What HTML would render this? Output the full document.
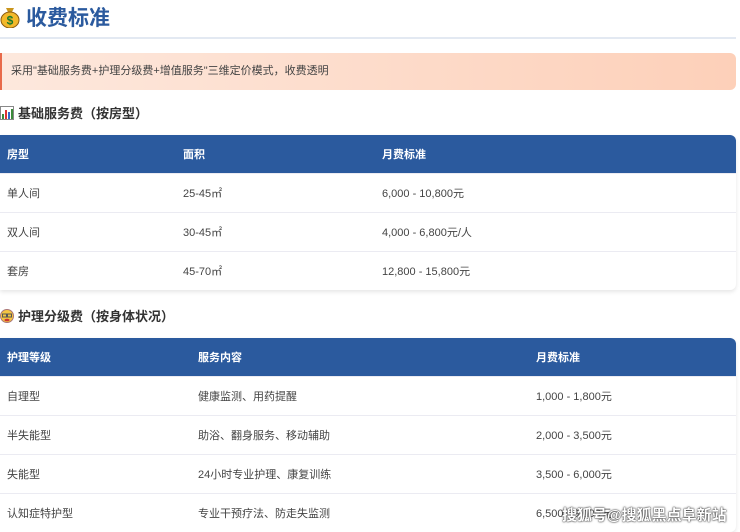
<!DOCTYPE html>
<html><head><meta charset="utf-8"><style>
*{margin:0;padding:0;box-sizing:border-box}
body{width:740px;height:531px;overflow:hidden;background:#fff;font-family:"Liberation Sans","Noto Sans CJK SC",sans-serif;color:#333;position:relative}
.h1{position:absolute;left:0;top:2px;height:30px;display:flex;align-items:center;font-size:21px;font-weight:bold;color:#2b5a9e}
.h1 .ic{width:20px;height:22px;margin-right:6px}
.line{position:absolute;left:0;top:37px;width:736px;height:2px;background:#e3e9f2}
.note{position:absolute;left:0;top:53px;width:736px;height:37px;background:linear-gradient(90deg,#fde8dd,#fdd0b9);border-left:2px solid #e86a4a;border-radius:0 6px 6px 0;font-size:11px;line-height:37px;padding-left:9px;color:#444}
.h2{position:absolute;left:0;font-size:13px;font-weight:bold;color:#333;display:flex;align-items:center}
.h2 .e{width:14px;height:14px;margin-right:4px}
table{position:absolute;left:0;width:736px;border-collapse:collapse;border-radius:0 6px 6px 0;overflow:hidden;box-shadow:0 2px 4px rgba(0,0,0,.1);font-size:11px}
th{background:#2b5a9e;color:#fff;text-align:left;font-weight:bold;height:38px;padding-left:7px}
td{height:39px;padding-left:7px;border-top:1px solid #ebebf2;color:#444}
.wm{position:absolute;left:562px;top:504px;font-size:15px;font-weight:bold;color:#fff;text-shadow:0 0 2px #333,0 0 1px #000;letter-spacing:0}
</style></head><body>
<div class="h1"><svg class="ic" viewBox="0 0 20 22"><path d="M6 2h8l-2 4h-4z" fill="#c9951c"/><ellipse cx="10" cy="14" rx="9" ry="8" fill="#f2b82a" stroke="#8a5a10" stroke-width="1"/><text x="10" y="18.5" font-size="12" text-anchor="middle" fill="#1a7a2a" font-weight="bold" font-family="Liberation Sans">$</text></svg>收费标准</div>
<div class="line"></div>
<div class="note">采用"基础服务费+护理分级费+增值服务"三维定价模式，收费透明</div>
<div class="h2" style="top:103px"><svg class="e" viewBox="0 0 14 14"><rect x="0.5" y="0.5" width="13" height="13" fill="#fff" stroke="#888"/><rect x="2" y="8" width="2" height="5" fill="#3a8a3a"/><rect x="5" y="4" width="2" height="9" fill="#d33"/><rect x="8" y="6" width="2" height="7" fill="#36c"/><rect x="11" y="3" width="2" height="10" fill="#3a8a3a"/></svg>基础服务费（按房型）</div>
<table style="top:135px">
<tr><th style="width:176px">房型</th><th style="width:199px">面积</th><th>月费标准</th></tr>
<tr><td>单人间</td><td>25-45㎡</td><td>6,000 - 10,800元</td></tr>
<tr><td>双人间</td><td>30-45㎡</td><td>4,000 - 6,800元/人</td></tr>
<tr><td>套房</td><td>45-70㎡</td><td>12,800 - 15,800元</td></tr>
</table>
<div class="h2" style="top:306px"><svg class="e" viewBox="0 0 14 14"><circle cx="7" cy="7" r="6.5" fill="#f5c542" stroke="#a77"/><rect x="2.5" y="5" width="4" height="3" fill="none" stroke="#555"/><rect x="7.5" y="5" width="4" height="3" fill="none" stroke="#555"/><ellipse cx="7" cy="11" rx="2.5" ry="1.3" fill="#c33"/></svg>护理分级费（按身体状况）</div>
<table style="top:338px">
<tr><th style="width:191px">护理等级</th><th style="width:338px">服务内容</th><th>月费标准</th></tr>
<tr><td>自理型</td><td>健康监测、用药提醒</td><td>1,000 - 1,800元</td></tr>
<tr><td>半失能型</td><td>助浴、翻身服务、移动辅助</td><td>2,000 - 3,500元</td></tr>
<tr><td>失能型</td><td>24小时专业护理、康复训练</td><td>3,500 - 6,000元</td></tr>
<tr><td>认知症特护型</td><td>专业干预疗法、防走失监测</td><td>6,500 - 9,000元</td></tr>
</table>
<div class="wm">搜狐号@搜狐黑点阜新站</div>
</body></html>
